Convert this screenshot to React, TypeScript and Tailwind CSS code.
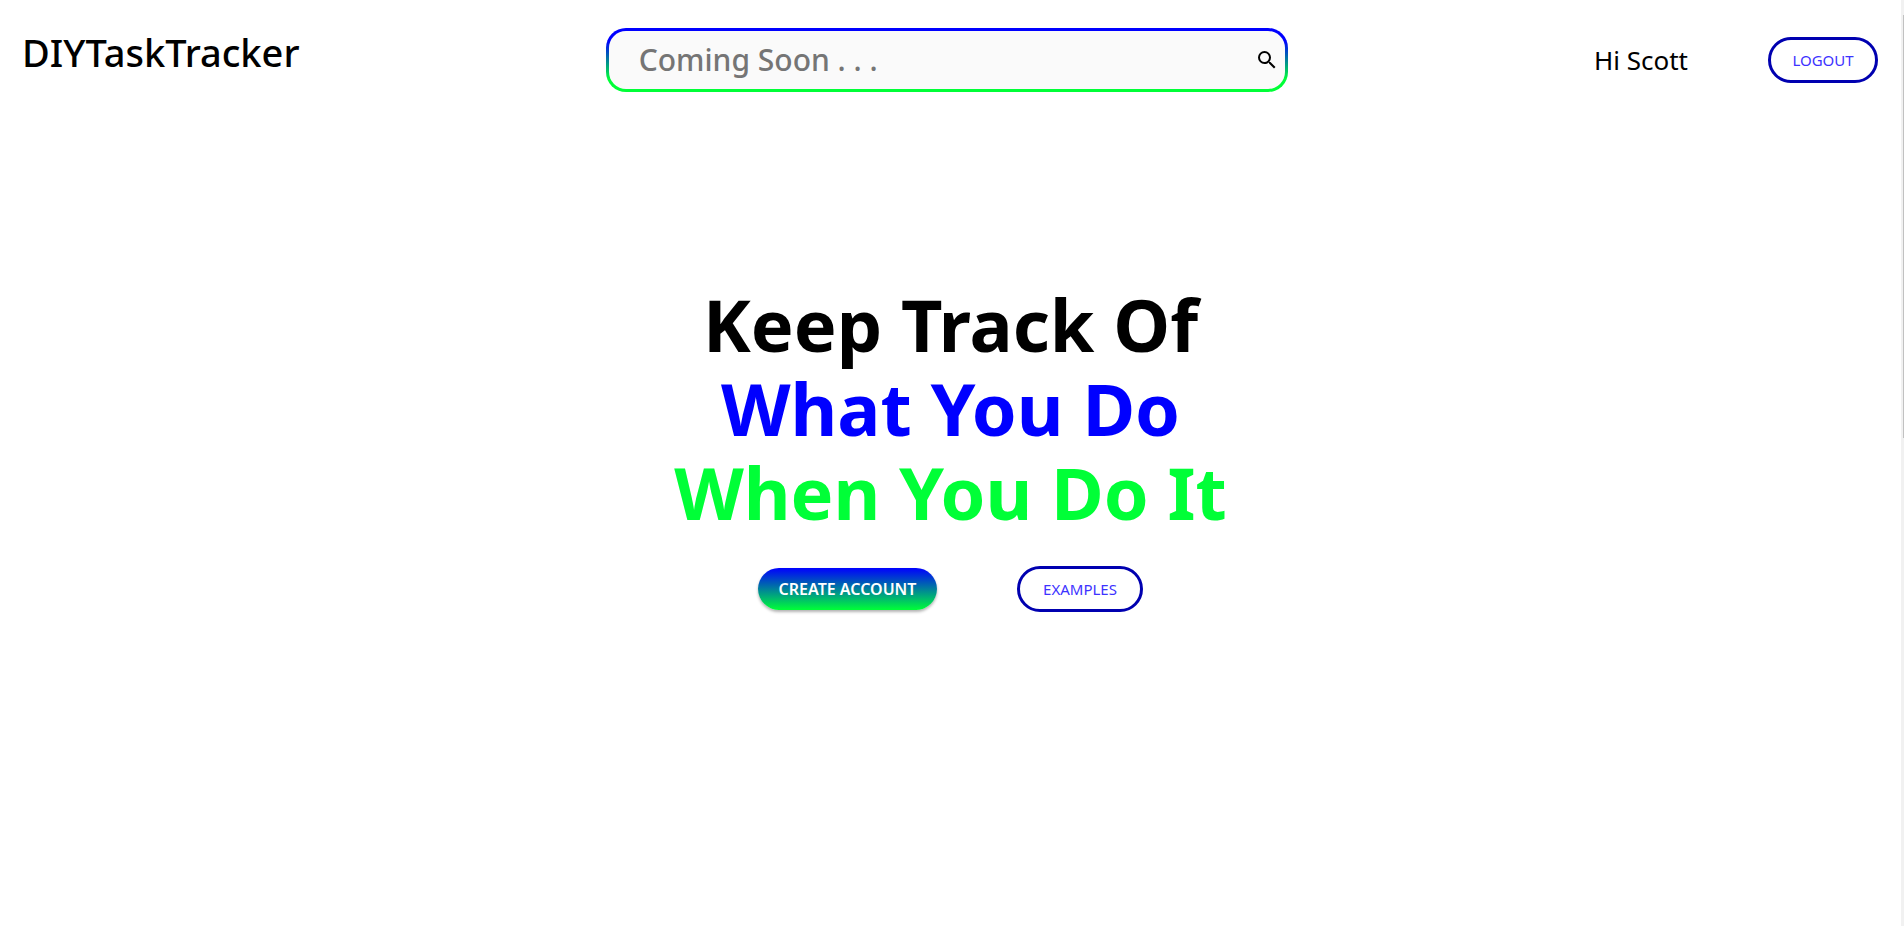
const FONT = "font-['Noto_Sans',sans-serif]";

const OUTLINE_BUTTON =
  'h-[46px] rounded-full border-3 border-[#0000b0] bg-white text-[15px] text-[#3d33ff]';

function Header() {
  return (
    <header className="flex items-center justify-between pt-7 pr-[23px] pl-[22px]">
      <a href="/" className="pb-4 text-[38px] leading-[48px] font-medium text-black">
        DIYTaskTracker
      </a>
      <form
        role="search"
        className="flex h-16 w-[682px] rounded-[20px] bg-linear-to-b/srgb from-[#0000ff] from-20% to-[#00ff37] to-80% p-[3px]"
        onSubmit={(event) => event.preventDefault()}
      >
        <div className="flex flex-1 items-center rounded-[17px] bg-[#fafafa] pr-1.5 pl-[30px]">
          <input
            type="search"
            aria-label="Search"
            placeholder="Coming Soon . . ."
            className="min-w-0 flex-1 bg-transparent text-3xl font-medium text-black outline-none placeholder:text-[#757575]"
          />
          <button type="submit" aria-label="Submit search">
            <svg viewBox="0 0 24 24" className="size-6" fill="currentColor" aria-hidden="true">
              <path d="M15.5 14h-.79l-.28-.27A6.471 6.471 0 0 0 16 9.5 6.5 6.5 0 1 0 9.5 16c1.61 0 3.09-.59 4.23-1.57l.27.28v.79l5 4.99L20.49 19l-4.99-5zm-6 0C7.01 14 5 11.99 5 9.5S7.01 5 9.5 5 14 7.01 14 9.5 11.99 14 9.5 14z" />
            </svg>
          </button>
        </div>
      </form>
      <div className="flex items-center gap-20">
        <span className="text-[26px] text-black">Hi Scott</span>
        <button type="button" className={`${OUTLINE_BUTTON} w-[110px]`}>
          LOGOUT
        </button>
      </div>
    </header>
  );
}

function Hero() {
  return (
    <main className="flex flex-col items-center pt-[190px]">
      <h1 className="text-center text-[72px] leading-[84px] font-bold text-black">
        <span className="block">Keep Track Of</span>
        <span className="block text-[#0000ff]">What You Do</span>
        <span className="block text-[#00ff37]">When You Do It</span>
      </h1>
      <div className="mt-8 flex items-center gap-20">
        <button
          type="button"
          className="h-[42px] w-[179px] rounded-full bg-linear-to-b/srgb from-[#0000ff] to-[#00ff37] text-base font-semibold text-white shadow-[0_2px_3px_rgba(0,0,0,0.3)]"
        >
          CREATE ACCOUNT
        </button>
        <button type="button" className={`${OUTLINE_BUTTON} w-[126px]`}>
          EXAMPLES
        </button>
      </div>
    </main>
  );
}

export default function App() {
  return (
    <div className={`flex min-h-screen bg-white ${FONT}`}>
      <div className="min-w-0 flex-1">
        <Header />
        <Hero />
      </div>
      <div className="flex w-[3px] justify-end bg-[#f1f1f1] pt-[15px]" aria-hidden="true">
        <div className="h-[423px] w-px bg-[#c1c1c1]" />
      </div>
    </div>
  );
}
